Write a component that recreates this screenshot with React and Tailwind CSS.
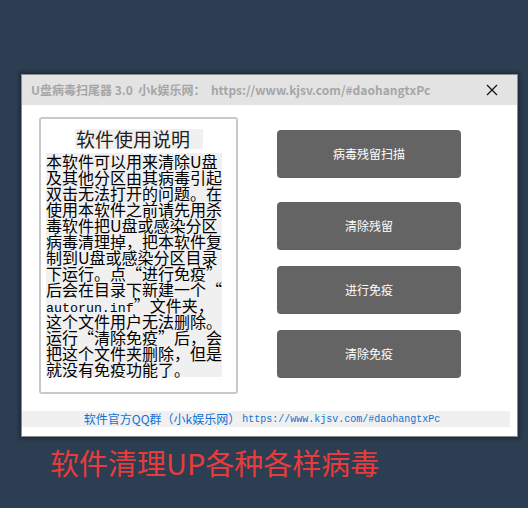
const lines = [
  '本软件可以用来清除U盘',
  '及其他分区由其病毒引起',
  '双击无法打开的问题。在',
  '使用本软件之前请先用杀',
  '毒软件把U盘或感染分区',
  '病毒清理掉，把本软件复',
  '制到U盘或感染分区目录',
  '下运行。点“进行免疫”',
  '后会在目录下新建一个“',
  null,
  '这个文件用户无法删除。',
  '运行“清除免疫”后，会',
  '把这个文件夹删除，但是',
  '就没有免疫功能了。',
];

const actions = ['病毒残留扫描', '清除残留', '进行免疫', '清除免疫'];

const cjk = { fontFamily: '"Noto Sans CJK SC", "Noto Sans", sans-serif' };
const mono = { fontFamily: '"Liberation Mono", monospace' };

export default function App() {
  return (
    <div className="w-[528px] h-[508px] bg-[#2c3e52] pt-[74px] pl-[21px]" style={cjk}>
      <div className="w-[497px] h-[363px] border border-[#8c8c8c] shadow-[0_0_3px_2px_rgba(20,30,45,0.6)] bg-white flex flex-col">
        <div className="h-[30px] bg-[#e3e3e3] flex items-center pl-[9px] pr-[19px] shrink-0">
          <span className="text-[12px] font-bold text-[#a6a6a6] whitespace-pre">
            U盘病毒扫尾器 3.0  小k娱乐网：  https://www.kjsv.com/#daohangtxPc
          </span>
          <svg className="ml-auto" width="12" height="12" viewBox="0 0 12 12">
            <path d="M1 1 L11 11 M11 1 L1 11" stroke="#111" strokeWidth="1.2" />
          </svg>
        </div>

        <div className="flex-1 flex flex-col">
          <div className="flex pt-[12px]">
            <div className="ml-[17px] w-[199px] h-[277px] border-2 border-[#c9c9c9] rounded-[3px] pt-[10px] pl-[5px]">
              <div className="ml-[29px] w-[128px] h-[20px] bg-[#f0f0f0] flex items-center text-[19px] leading-[20px] text-[#222] pl-[1px]">
                软件使用说明
              </div>
              <div className="mt-[4px] w-[176px] bg-[#f0f0f0] text-[16px] leading-[16px] text-black">
                {lines.map((l, i) =>
                  l === null ? (
                    <div key={i} className="whitespace-pre h-[16px]">
                      <span className="text-[13.3px]" style={mono}>autorun.inf</span>”文件夹，
                    </div>
                  ) : (
                    <div key={i} className="whitespace-pre h-[16px]">{l}</div>
                  )
                )}
              </div>
            </div>

            <div className="ml-[39px] mt-[13px] w-[184px] flex flex-col">
              {actions.map((a, i) => (
                <button
                  key={a}
                  className={`h-[48px] w-full rounded-[4px] bg-[#646464] text-white text-[12px] ${
                    i === 0 ? '' : i === 1 ? 'mt-[24px]' : 'mt-[16px]'
                  }`}
                >
                  {a}
                </button>
              ))}
            </div>
          </div>

          <div className="mt-[17px] w-[488px] h-[16px] bg-[#f0f0f0] flex items-center justify-center text-[12px] text-[#1070d0] pr-[8px]">
            <span>软件官方QQ群（小k娱乐网）</span>
            <span className="ml-[2px] text-[10px]" style={mono}>
              https://www.kjsv.com/#daohangtxPc
            </span>
          </div>
        </div>
      </div>

      <div className="mt-[6px] ml-[29px] text-[29px] leading-[38px] text-[#e83b3b]">
        软件清理UP各种各样病毒
      </div>
    </div>
  );
}
